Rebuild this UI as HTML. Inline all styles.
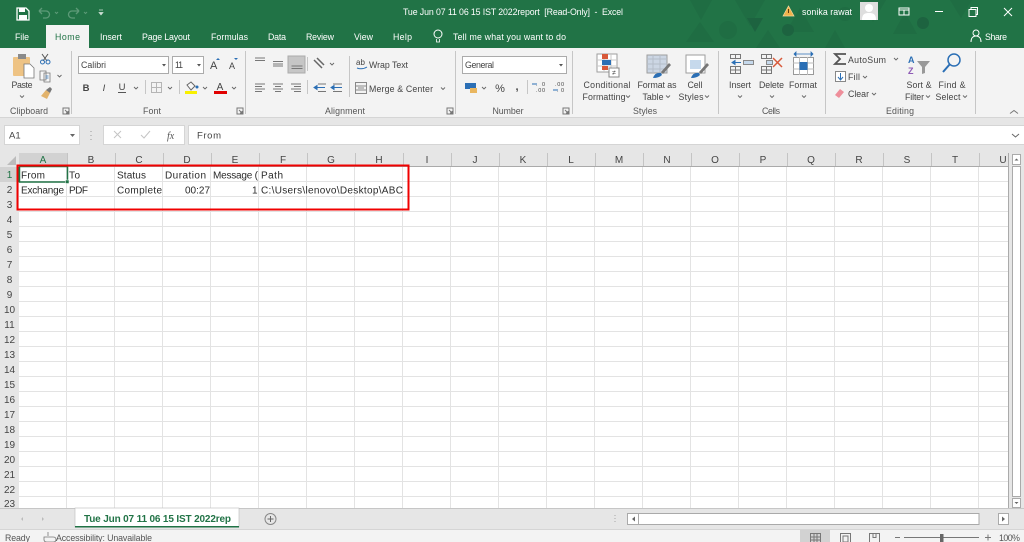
<!DOCTYPE html>
<html><head><meta charset="utf-8"><title>Excel</title>
<style>
html,body{margin:0;padding:0;width:1024px;height:542px;overflow:hidden;background:#f3f3f3}
svg{display:block;position:absolute;left:0;top:0;filter:blur(.3px)}
text{font-family:"Liberation Sans",sans-serif;font-size:8.8px;fill:#444}
.w{fill:#fff}
.l{fill:#555}
.m{text-anchor:middle}
.c{font-size:10px;fill:#2a2a2a}
.h{font-size:10px;fill:#444;text-anchor:middle}
.a{fill:none;stroke:#666;stroke-width:.9}
.i{fill:none;stroke:#777;stroke-width:1}
.b{fill:#2b6fb5}
</style></head><body>
<svg width="1024" height="542" viewBox="0 0 1024 542" xmlns="http://www.w3.org/2000/svg">
<defs>
<pattern id="g" x="19" y="167" width="48" height="15" patternUnits="userSpaceOnUse">
<rect width="48" height="15" fill="#fff"/><rect x="0" y="14" width="48" height="1" fill="#e3e3e3"/><rect x="47" width="1" height="15" fill="#e3e3e3"/>
</pattern>
</defs>
<!-- title bar -->
<rect width="1024" height="48" fill="#217346"/>
<g fill="#1f6d43">
<path d="M690 0h22l-11 20zM735 0h30l-15 26zM800 8l14 24h-28zM860 0h26l-13 22zM905 12l12 22h-24zM950 0h22l-11 18zM700 22l14 20h-28zM768 30l12 18h-24zM835 30l10 18h-20z"/>
<circle cx="728" cy="30" r="9"/><circle cx="845" cy="14" r="7"/>
</g>
<g fill="#1d6340"><circle cx="788" cy="30" r="6"/><circle cx="923" cy="23" r="6"/><path d="M747 18h16l-8 14z"/></g>
<!-- QAT -->
<path d="M17 8h9l3 3v9H17z" fill="none" stroke="#fff" stroke-width="1.300"/><rect x="19" y="8" width="6" height="4" fill="#fff"/><rect x="19" y="15" width="8" height="5" fill="#fff"/>
<path d="M39 11h7a3 3 0 0 1 0 7h-3M39 11l3-3M39 11l3 3" fill="none" stroke="#5d9a78" stroke-width="1.300"/>
<path d="M55 12l1.500 1.500 1.500-1.500" fill="none" stroke="#5d9a78"/>
<path d="M79 11h-7a3 3 0 0 0 0 7h3M79 11l-3-3M79 11l-3 3" fill="none" stroke="#5d9a78" stroke-width="1.300"/>
<path d="M84 12l1.500 1.500 1.500-1.500" fill="none" stroke="#5d9a78"/>
<path d="M99 10h4M99 12.500h4l-2 2.500z" fill="#cfe0d6" stroke="#cfe0d6" stroke-width=".7"/>
<text class="w" x="403" y="15" textLength="220" xml:space="preserve">Tue Jun 07 11 06 15 IST 2022report  [Read-Only]  -  Excel</text>
<path d="M783 16l5.500-10 5.500 10z" fill="#f0b24b" stroke="#f6d9a0" stroke-width=".7"/>
<path d="M788.500 9v4" stroke="#5a3a10" stroke-width="1"/>
<text class="w" x="802" y="15" textLength="50">sonika rawat</text>
<rect x="860" y="2" width="18" height="18" fill="#dedede"/><circle cx="869" cy="8" r="4" fill="#fff"/><path d="M862 20c0-6 3-7 7-7s7 1 7 7z" fill="#fff"/>
<rect x="899" y="8" width="10" height="7" fill="none" stroke="#fff"/><path d="M899 10h10M904 10v5" stroke="#fff"/>
<rect x="935" y="11" width="8" height="1" fill="#fff"/>
<rect x="969" y="9.500" width="7" height="7" fill="none" stroke="#fff"/><path d="M971 9V7.500h6.500v7H976" fill="none" stroke="#fff"/>
<path d="M1004 8l8 8M1012 8l-8 8" stroke="#fff"/>
<!-- tabs -->
<rect x="46" y="25" width="43" height="24" fill="#f3f3f3"/>
<text class="w" x="15" y="40" textLength="14">File</text>
<text x="55" y="40" textLength="25" style="fill:#217346">Home</text>
<text class="w" x="100" y="40" textLength="22">Insert</text>
<text class="w" x="142" y="40" textLength="48">Page Layout</text>
<text class="w" x="211" y="40" textLength="37">Formulas</text>
<text class="w" x="268" y="40" textLength="18">Data</text>
<text class="w" x="306" y="40" textLength="28">Review</text>
<text class="w" x="354" y="40" textLength="19">View</text>
<text class="w" x="393" y="40" textLength="19">Help</text>
<circle cx="438" cy="34" r="4" fill="none" stroke="#fff"/><path d="M436.500 39v3h3v-3" fill="none" stroke="#fff" stroke-width=".8"/>
<text class="w" x="453" y="40" textLength="113">Tell me what you want to do</text>
<circle cx="976" cy="33" r="3" fill="none" stroke="#fff"/><path d="M971 42c0-4 2-6 5-6s5 2 5 6" fill="none" stroke="#fff"/>
<text class="w" x="985" y="40" textLength="22">Share</text>
<!-- ribbon -->
<rect y="48" width="1024" height="69" fill="#f3f3f3"/>
<rect y="117" width="1024" height="391" fill="#e6e6e6"/>
<rect y="117" width="1024" height="1" fill="#d5d5d5"/>
<g fill="#c6c6c6"><rect x="71" y="51" width="1" height="63"/><rect x="245" y="51" width="1" height="63"/><rect x="455" y="51" width="1" height="63"/><rect x="572" y="51" width="1" height="63"/><rect x="718" y="51" width="1" height="63"/><rect x="825" y="51" width="1" height="63"/><rect x="975" y="51" width="1" height="63"/><rect x="349" y="56" width="1" height="41"/><rect x="307" y="57" width="1" height="14"/><rect x="307" y="80" width="1" height="14"/><rect x="145" y="80" width="1" height="14"/><rect x="179" y="80" width="1" height="14"/><rect x="527" y="80" width="1" height="14"/></g>
<!-- clipboard -->
<rect x="13" y="57" width="17" height="19" rx="1" fill="#eec384"/><rect x="18" y="54" width="8" height="5" fill="#8a8a8a"/>
<path d="M24 64h6l4 4v10H24z" fill="#fff" stroke="#777" stroke-width=".8"/>
<text class="m" x="22" y="88" textLength="21">Paste</text><path class="a" d="M20 95.500l2 2 2-2"/>
<path d="M42 54l5 7M48 54l-5 7" stroke="#555" fill="none"/><circle cx="42.500" cy="62" r="2" fill="none" stroke="#2b6fb5"/><circle cx="48" cy="62" r="2" fill="none" stroke="#2b6fb5"/>
<path d="M40 71h6v9h-6zM44 73h6v9h-6z" fill="#f7f7f7" stroke="#777" stroke-width=".8"/><path d="M45.500 76h3M45.500 78h3" stroke="#2b6fb5" stroke-width=".7"/>
<path class="a" d="M57.500 75l2 2 2-2"/>
<path d="M41 96l5-6 4 3-3 6z" fill="#e2b36c"/><path d="M46 90l4-3 2 2-2 4z" fill="#777"/>
<text class="m" x="29" y="114" textLength="38" style="fill:#555">Clipboard</text>
<path class="i" d="M63 108h6v6h-6zM65 110l3 3M68 111v2h-2" stroke-width=".7"/>
<!-- font -->
<rect x="78.500" y="56.500" width="90" height="17" fill="#fff" stroke="#ababab"/>
<text x="81" y="68" textLength="25">Calibri</text><path d="M162 64h4l-2 2.500z" fill="#555"/>
<rect x="172.500" y="56.500" width="31" height="17" fill="#fff" stroke="#ababab"/>
<text x="175" y="68" textLength="8">11</text><path d="M197 64h4l-2 2.500z" fill="#555"/>
<text x="210" y="69" style="font-size:11px">A</text><path d="M216 60l2-2 2 2z" fill="#2b6fb5"/>
<text x="229" y="69" style="font-size:9px">A</text><path d="M234 58l2 2 2-2z" fill="#2b6fb5"/>
<text class="m" x="86" y="91" style="font-weight:bold;font-size:9.500px">B</text>
<text class="m" x="104" y="91" style="font-style:italic;font-size:9.500px">I</text>
<text class="m" x="122" y="90" style="font-size:9.500px">U</text><rect x="118" y="92" width="8" height="1" fill="#555"/>
<path class="a" d="M134 87l2 2 2-2M168 87l2 2 2-2M203 87l2 2 2-2M232 87l2 2 2-2"/>
<path d="M151.500 82.500h10v10h-10zM151.500 87.500h10M156.500 82.500v10" fill="none" stroke="#b5b5b5"/>
<path d="M187 85l4-3 4 4-4 4z" fill="#f8f8f8" stroke="#666"/><circle cx="197" cy="87" r="1.500" fill="#2b6fb5"/><rect x="185" y="91" width="12" height="3" fill="#f8f000"/>
<text class="m" x="220" y="90" style="font-size:10px">A</text><rect x="214" y="91" width="13" height="3" fill="#e00000"/>
<text class="m" x="152" y="114" textLength="18" style="fill:#555">Font</text>
<path class="i" d="M237 108h6v6h-6zM239 110l3 3M242 111v2h-2" stroke-width=".7"/>
<!-- alignment -->
<rect x="288" y="56" width="17" height="17" fill="#c6c6c6" stroke="#ababab"/>
<path class="i" d="M255 58h10M255 60.500h10M273 61.500h10M273 64h10M273 66h10M291.500 66h11M291.500 68.500h11"/>
<path d="M314 60l8 8M317 58l7 7" stroke="#666" stroke-width="1.500" fill="none"/><path class="a" d="M330 63l2 2 2-2"/>
<path class="i" d="M255 84h10M255 86.500h7M255 89h10M255 91.500h7M273 84h10M275 86.500h6M273 89h10M275 91.500h6M291 84h10M294 86.500h7M291 89h10M294 91.500h7M318 84h8M318 91.500h8M333 84h9M333 91.500h9"/>
<path d="M314 87.500h11M314 87.500l3-2v4zM331 87.500h11M331 87.500l3-2v4z" stroke="#2b6fb5" fill="#2b6fb5"/>
<text x="356" y="65" style="font-size:8px">ab</text><path d="M357 68q5 2 10-1" fill="none" stroke="#2b6fb5"/>
<text x="369" y="68" textLength="39">Wrap Text</text>
<path d="M355.500 82.500h11v11h-11zM355.500 86h11M355.500 90h11M358 88h6" fill="none" stroke="#888"/>
<text x="369" y="92" textLength="64">Merge &amp; Center</text><path class="a" d="M441 87.500l2 2 2-2"/>
<text class="m" x="345" y="114" textLength="40" style="fill:#555">Alignment</text>
<path class="i" d="M447 108h6v6h-6zM449 110l3 3M452 111v2h-2" stroke-width=".7"/>
<!-- number -->
<rect x="462.500" y="56.500" width="104" height="17" fill="#fff" stroke="#ababab"/>
<text x="465" y="68" textLength="29">General</text><path d="M559 64h4l-2 2.500z" fill="#555"/>
<rect x="465" y="83" width="11" height="6" fill="#2b6fb5"/><rect x="470" y="88" width="7" height="5" fill="#e9b65f"/><path class="a" d="M482 87l2 2 2-2"/>
<text class="m" x="500" y="92" style="font-size:11px">%</text><text class="m" x="517" y="90" style="font-size:11px;font-weight:bold">,</text>
<text x="536" y="92" style="font-size:5.500px" textLength="9">.00</text><text x="536" y="86" style="font-size:5.500px" textLength="9">.0</text><path d="M532 84h5" stroke="#2b6fb5"/>
<text x="555" y="86" style="font-size:5.500px" textLength="9">.00</text><text x="557" y="92" style="font-size:5.500px" textLength="7">.0</text><path d="M553 90h5" stroke="#2b6fb5"/>
<text class="m" x="508" y="114" textLength="31" style="fill:#555">Number</text>
<path class="i" d="M563 108h6v6h-6zM565 110l3 3M568 111v2h-2" stroke-width=".7"/>
<!-- styles -->
<rect x="597" y="54" width="20" height="18" fill="#fff" stroke="#9d9d9d"/>
<path d="M597 60h20M597 66h20M604 54v18M611 54v18" stroke="#c8c8c8" fill="none"/>
<rect x="602" y="54" width="6" height="5" fill="#d8593a"/><rect x="602" y="60" width="9" height="5" fill="#2b6fb5"/><rect x="602" y="66" width="6" height="4" fill="#d8593a"/>
<rect x="609" y="68" width="10" height="9" fill="#fff" stroke="#888"/><text class="m" x="614" y="75" style="font-size:7px">≠</text>
<text class="m" x="607" y="88" textLength="47">Conditional</text><text class="m" x="604" y="100" textLength="43">Formatting</text><path class="a" d="M626 95.500l2 2 2-2"/>
<rect x="647" y="55" width="20" height="18" fill="#ccd6e4" stroke="#9d9d9d"/><path d="M647 59h20M647 64h20M647 69h20M653 55v18M660 55v18" stroke="#b5bdc9" fill="none"/>
<path d="M661 72l8-9 2 2-8 9z" fill="#777"/><path d="M653 78q2-6 8-5l1 2q-3 3-9 3z" fill="#2b6fb5"/>
<text class="m" x="657" y="88" textLength="39">Format as</text><text class="m" x="653" y="100" textLength="21">Table</text><path class="a" d="M666 95.500l2 2 2-2"/>
<rect x="686" y="55" width="19" height="18" fill="#fff" stroke="#9d9d9d"/><rect x="690" y="60" width="11" height="9" fill="#c6d9ec"/>
<path d="M699 72l8-9 2 2-8 9z" fill="#777"/><path d="M691 78q2-6 8-5l1 2q-3 3-9 3z" fill="#2b6fb5"/>
<text class="m" x="695" y="88" textLength="15">Cell</text><text class="m" x="691" y="100" textLength="25">Styles</text><path class="a" d="M705 95.500l2 2 2-2"/>
<text class="m" x="645" y="114" textLength="24" style="fill:#555">Styles</text>
<!-- cells -->
<path class="i" d="M730.500 54.500h10v4h-10zM735.500 54.500v4M730.500 66.500h10v7h-10zM730.500 70h10M735.500 66.500v7"/>
<rect x="743.500" y="60.500" width="10" height="4" fill="#c6d9ec" stroke="#888"/><path d="M732 62.500h9M732 62.500l3-2v4z" stroke="#2b6fb5" fill="#2b6fb5"/>
<text class="m" x="740" y="88" textLength="22">Insert</text><path class="a" d="M738 95.500l2 2 2-2"/>
<path class="i" d="M761.500 54.500h10v4h-10zM766.500 54.500v4M761.500 66.500h10v7h-10zM761.500 70h10M766.500 66.500v7"/><rect x="766.500" y="60.500" width="6" height="4" fill="#c6d9ec" stroke="#888"/>
<path d="M773 58l9 9M782 58l-9 9" stroke="#d8593a" stroke-width="1.500"/>
<text class="m" x="771.500" y="88" textLength="25">Delete</text><path class="a" d="M770 95.500l2 2 2-2"/>
<rect x="793.500" y="57.500" width="20" height="17" fill="#fff" stroke="#999"/><path class="i" d="M793 63h21M793 69h21M799.500 57v18M807.500 57v18" style="stroke:#bbb"/><rect x="799.500" y="62" width="8" height="8" fill="#2b6fb5"/>
<path d="M794 54h19M794 54l2-2v4zM813 54l-2-2v4z" stroke="#2b6fb5" fill="#2b6fb5" stroke-width=".8"/>
<text class="m" x="803" y="88" textLength="28">Format</text><path class="a" d="M802 95.500l2 2 2-2"/>
<text class="m" x="771" y="114" textLength="18" style="fill:#555">Cells</text>
<!-- editing -->
<path d="M846 54h-11l5 5-5 5h11" fill="none" stroke="#555" stroke-width="1.800"/>
<text x="848" y="63" textLength="38">AutoSum</text><path class="a" d="M894 58l2 2 2-2"/>
<rect x="835.500" y="71.500" width="10" height="10" fill="#fff" stroke="#888"/><path d="M840.500 73v7M838 77l2.500 3 2.500-3" stroke="#2b6fb5" fill="none"/>
<text x="848" y="80" textLength="12">Fill</text><path class="a" d="M863 76l2 2 2-2"/>
<path d="M835 95l5-6 4 3-5 6z" fill="#ee8e9a"/>
<text x="848" y="97" textLength="21">Clear</text><path class="a" d="M872 93l2 2 2-2"/>
<text x="908" y="63" style="font-size:9px;fill:#2b6fb5;font-weight:bold">A</text><text x="908" y="74" style="font-size:9px;fill:#8e5bb5;font-weight:bold">Z</text>
<path d="M917 61h13l-5 6v6l-3 1v-7z" fill="#999"/>
<text class="m" x="919" y="88" textLength="25">Sort &amp;</text><text class="m" x="914.500" y="100" textLength="19">Filter</text><path class="a" d="M926 95.500l2 2 2-2"/>
<circle cx="954" cy="60" r="6" fill="none" stroke="#2b6fb5" stroke-width="1.500"/><path d="M950 64l-7 8" stroke="#2b6fb5" stroke-width="2"/>
<text class="m" x="952" y="88" textLength="27">Find &amp;</text><text class="m" x="948" y="100" textLength="25">Select</text><path class="a" d="M963 95.500l2 2 2-2"/>
<text class="m" x="900" y="114" textLength="28" style="fill:#555">Editing</text>
<path d="M1010 113.500l4-3 4 3" fill="none" stroke="#777"/>
<!-- formula bar -->
<rect x="4.500" y="125.500" width="75" height="19" fill="#fff" stroke="#d5d5d5"/>
<text x="9" y="138.500" style="font-size:9.500px">A1</text><path d="M70 134h5l-2.500 3z" fill="#666"/>
<path d="M91 131v1M91 135v1M91 139v1" stroke="#999"/>
<rect x="103.500" y="125.500" width="81" height="19" fill="#fff" stroke="#d5d5d5"/>
<path d="M114 131l7 7M121 131l-7 7" stroke="#c4c4c4"/><path d="M141 135l3 3 6-7" stroke="#c4c4c4" fill="none"/>
<text x="167" y="139" style="font-size:10px;font-style:italic;font-family:'Liberation Serif',serif;fill:#555">fx</text>
<rect x="188.500" y="125.500" width="836" height="19" fill="#fff" stroke="#d5d5d5"/>
<text x="197" y="138.500" textLength="24" style="font-size:9.500px">From</text><path d="M1012 134l3.500 3 3.500-3" fill="none" stroke="#666"/>
<!-- sheet -->
<rect x="19" y="167" width="989" height="341" fill="url(#g)" shape-rendering="crispEdges"/>
<rect x="0" y="153" width="1008" height="14" fill="#e6e6e6"/>
<rect x="19" y="153" width="48" height="14" fill="#d2d2d2"/><rect x="19" y="165" width="48" height="2" fill="#217346"/>
<rect x="0" y="167" width="19" height="341" fill="#e6e6e6"/><rect x="0" y="167" width="19" height="15" fill="#d2d2d2"/><rect x="17" y="167" width="2" height="15" fill="#217346"/>
<path d="M7 165l9-9v9z" fill="#bcbcbc"/>
<g fill="#c4c4c4" shape-rendering="crispEdges">
<rect x="67" y="153" width="1" height="13"/><rect x="115" y="153" width="1" height="13"/><rect x="163" y="153" width="1" height="13"/><rect x="211" y="153" width="1" height="13"/><rect x="259" y="153" width="1" height="13"/><rect x="307" y="153" width="1" height="13"/><rect x="355" y="153" width="1" height="13"/><rect x="403" y="153" width="1" height="13"/><rect x="451" y="153" width="1" height="13"/><rect x="499" y="153" width="1" height="13"/><rect x="547" y="153" width="1" height="13"/><rect x="595" y="153" width="1" height="13"/><rect x="643" y="153" width="1" height="13"/><rect x="691" y="153" width="1" height="13"/><rect x="739" y="153" width="1" height="13"/><rect x="787" y="153" width="1" height="13"/><rect x="835" y="153" width="1" height="13"/><rect x="883" y="153" width="1" height="13"/><rect x="931" y="153" width="1" height="13"/><rect x="979" y="153" width="1" height="13"/>
<rect x="19" y="166" width="989" height="1" fill="#aaa"/><rect x="1008" y="153" width="1" height="355" fill="#aaa"/>
<rect x="0" y="508" width="1024" height="1" fill="#c6c6c6"/>
</g>
<g>
<text class="h" x="43" y="163" style="fill:#217346">A</text><text class="h" x="91" y="163">B</text><text class="h" x="139" y="163">C</text><text class="h" x="187" y="163">D</text><text class="h" x="235" y="163">E</text><text class="h" x="283" y="163">F</text><text class="h" x="331" y="163">G</text><text class="h" x="379" y="163">H</text><text class="h" x="427" y="163">I</text><text class="h" x="475" y="163">J</text><text class="h" x="523" y="163">K</text><text class="h" x="571" y="163">L</text><text class="h" x="619" y="163">M</text><text class="h" x="667" y="163">N</text><text class="h" x="715" y="163">O</text><text class="h" x="763" y="163">P</text><text class="h" x="811" y="163">Q</text><text class="h" x="859" y="163">R</text><text class="h" x="907" y="163">S</text><text class="h" x="955" y="163">T</text><text class="h" x="1003" y="163">U</text>
<text class="h" x="9.500" y="178" style="fill:#217346">1</text><text class="h" x="9.500" y="193">2</text><text class="h" x="9.500" y="208">3</text><text class="h" x="9.500" y="223">4</text><text class="h" x="9.500" y="238">5</text><text class="h" x="9.500" y="253">6</text><text class="h" x="9.500" y="268">7</text><text class="h" x="9.500" y="283">8</text><text class="h" x="9.500" y="298">9</text><text class="h" x="9.500" y="313">10</text><text class="h" x="9.500" y="328">11</text><text class="h" x="9.500" y="343">12</text><text class="h" x="9.500" y="358">13</text><text class="h" x="9.500" y="373">14</text><text class="h" x="9.500" y="388">15</text><text class="h" x="9.500" y="403">16</text><text class="h" x="9.500" y="418">17</text><text class="h" x="9.500" y="433">18</text><text class="h" x="9.500" y="448">19</text><text class="h" x="9.500" y="463">20</text><text class="h" x="9.500" y="478">21</text><text class="h" x="9.500" y="493">22</text><text class="h" x="9.500" y="507">23</text>
</g>
<!-- cell text -->
<text class="c" x="21" y="178.500" textLength="24">From</text>
<text class="c" x="69" y="178.500" textLength="11">To</text>
<text class="c" x="117" y="178.500" textLength="29">Status</text>
<text class="c" x="165" y="178.500" textLength="41">Duration</text>
<text class="c" x="213" y="178.500" textLength="45">Message (</text>
<text class="c" x="261" y="178.500" textLength="22">Path</text>
<text class="c" x="21" y="193.500" textLength="43">Exchange</text>
<text class="c" x="69" y="193.500" textLength="19">PDF</text>
<text class="c" x="117" y="193.500" textLength="45">Complete</text>
<text class="c" x="185" y="193.500" textLength="25">00:27</text>
<text class="c" x="252" y="193.500" textLength="5">1</text>
<text class="c" x="261" y="193.500" textLength="142">C:\Users\lenovo\Desktop\ABC</text>
<rect x="19.500" y="166.500" width="48" height="15.500" fill="none" stroke="#217346" stroke-width="1.500"/><rect x="65.500" y="180" width="3.500" height="3.500" fill="#217346" stroke="#fff" stroke-width=".5"/>
<rect x="17.500" y="165.500" width="391" height="44" fill="none" stroke="#f00000" stroke-width="2"/>
<!-- v scrollbar -->
<rect x="1009" y="153" width="15" height="355" fill="#e6e6e6"/>
<rect x="1012.500" y="154.500" width="8" height="10" fill="#fff" stroke="#aaa"/><path d="M1014.500 160.500l2-2 2 2z" fill="#666"/>
<rect x="1012.500" y="166.500" width="8" height="330" fill="#fff" stroke="#aaa"/>
<rect x="1012.500" y="498.500" width="8" height="9" fill="#fff" stroke="#aaa"/><path d="M1014.500 502l2 2 2-2z" fill="#666"/>
<!-- sheet tabs -->
<rect y="509" width="1024" height="20" fill="#e6e6e6"/>
<rect y="529" width="1024" height="1" fill="#d5d5d5"/>
<rect x="75" y="508" width="164" height="19" fill="#fff" stroke="#bbb" stroke-width=".6"/><rect x="75" y="526" width="164" height="1.500" fill="#217346"/>
<text x="84" y="522" textLength="147" style="font-size:10px;font-weight:bold;fill:#217346">Tue Jun 07 11 06 15 IST 2022rep</text>
<path d="M23 517v4l-2-2zM42 517v4l2-2z" fill="#bbb"/>
<circle cx="270.500" cy="519" r="5.500" fill="none" stroke="#888"/><path d="M267.500 519h6M270.500 516v6" stroke="#666"/>
<path d="M615 515v1M615 518v1M615 521v1" stroke="#bbb" stroke-width="1.500"/>
<rect x="627.500" y="513.500" width="351.500" height="11" fill="#fff" stroke="#aaa"/><rect x="627.500" y="513.500" width="11" height="11" fill="#fff" stroke="#aaa"/><path d="M635 516.500v5l-3-2.500z" fill="#666"/>
<rect x="998.500" y="513.500" width="10" height="11" fill="#fff" stroke="#aaa"/><path d="M1002 516.500v5l3-2.500z" fill="#666"/>
<!-- status bar -->
<rect y="530" width="1024" height="12" fill="#f3f3f3"/>
<text x="5" y="541" textLength="25" style="fill:#555">Ready</text>
<path d="M44 537h9q3 0 3 2.500t-3 2.500h-6q-3 0-3-2.500zM48 532v4" fill="none" stroke="#777" stroke-width=".8"/>
<text x="56" y="541" textLength="96" style="fill:#555">Accessibility: Unavailable</text>
<rect x="800" y="530" width="30" height="12" fill="#d2d2d2"/>
<path class="i" d="M810.500 533.500h10v9h-10zM810.500 537h10M810.500 540h10M814 533.500v9M817 533.500v9"/>
<path class="i" d="M840.500 533.500h10v9h-10zM843 536h5v6h-5z"/>
<path class="i" d="M869.500 533.500h10v9h-10zM873 533.500v4h3v-4"/>
<path d="M895 537.500h5M904 537.500h75M985 537.500h6M988 534.500v6" stroke="#777" fill="none"/>
<rect x="940" y="534" width="3.500" height="8" fill="#666"/>
<text x="999" y="541" textLength="21" style="fill:#555">100%</text>
</svg>
</body></html>
